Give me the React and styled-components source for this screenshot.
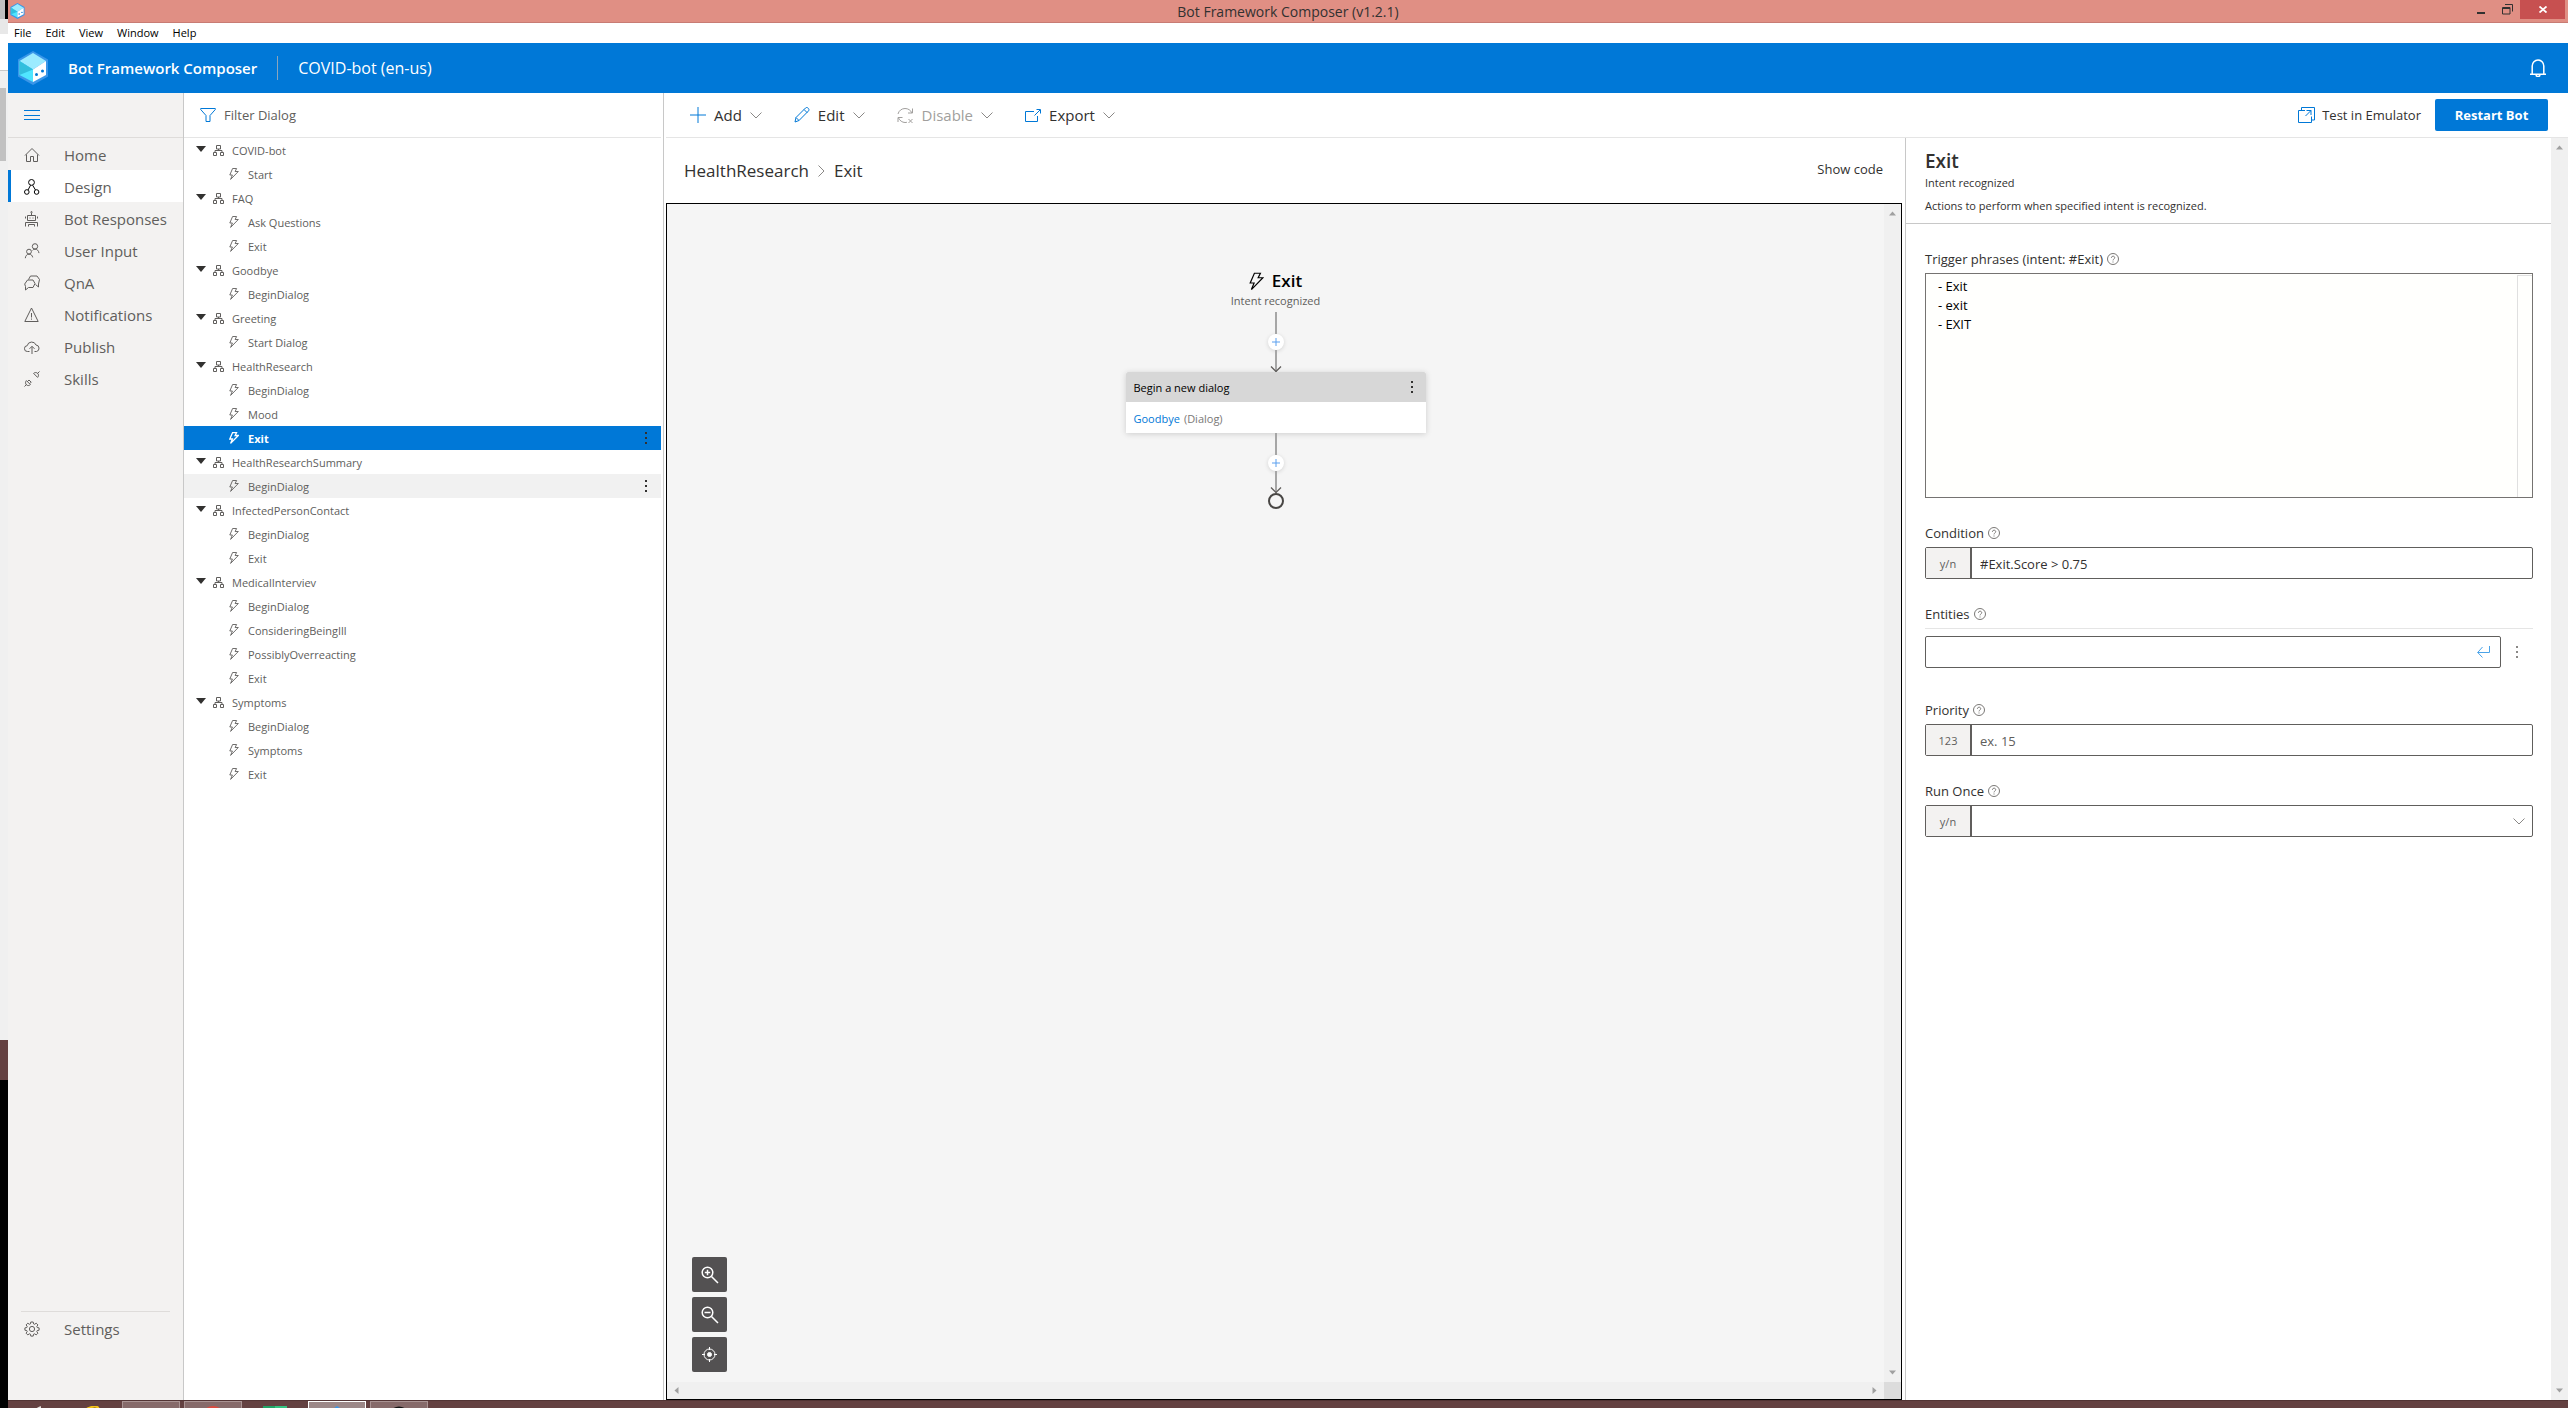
import React from 'react';
import styled, { createGlobalStyle, css } from 'styled-components';

const blue = '#0078d7';
const ink = '#323130';
const muted = '#605e5c';
const line = '#e5e5e5';

const GlobalStyle = createGlobalStyle`
  *, *::before, *::after { box-sizing: border-box; }
  body { margin: 0; background: #fff; }
  body, button, input, select, textarea {
    font-family: "Open Sans", "Noto Sans", sans-serif;
    color: ${ink};
  }
  button { border: 0; padding: 0; margin: 0; background: none; cursor: pointer; text-align: left; }
  a { color: inherit; text-decoration: none; }
  svg { display: block; flex: none; }
`;

/* ---------- icons ---------- */

const Icon = ({ w = 16, h = w, box = `0 0 ${w} ${h}`, sw = 1, color = 'currentColor', children }) => (
  <svg width={w} height={h} viewBox={box} fill="none" stroke={color} strokeWidth={sw} aria-hidden="true">
    {children}
  </svg>
);

const HomeIcon = () => (
  <Icon>
    <path d="M1 8.5 8 1.5l7 7M2.5 7.5v7h4v-5h3v5h4v-7" />
  </Icon>
);
const DesignIcon = () => (
  <Icon>
    <circle cx="7.5" cy="3.4" r="2.9" />
    <circle cx="2.8" cy="13" r="2.3" />
    <circle cx="12.6" cy="13" r="2.3" />
    <path d="M6.6 6.2 4 11M8.6 6.2l2.9 4.8" />
  </Icon>
);
const BotIcon = () => (
  <Icon>
    <circle cx="7.5" cy="1.2" r=".7" />
    <path d="M7.5 2v2M3.5 4.500h8v5h-8zM1.5 5.5v2M13.5 5.5v2M5.5 7h1M8.5 7h1M1.5 15.5v-4h12v4M4.5 15.5v-2h6v2" />
  </Icon>
);
const UsersIcon = () => (
  <Icon>
    <circle cx="11" cy="3.4" r="2.7" />
    <circle cx="5" cy="8.6" r="2.4" />
    <path d="M1.3 15.2c.2-2.4 1.6-4 3.7-4s3.4 1.3 3.700 3.200M8.6 7.4c.6-.8 1.400-1.300 2.400-1.300 2.100 0 3.600 1.500 4 4" />
  </Icon>
);
const ChatIcon = () => (
  <Icon>
    <path d="M4.500 4.500l2-3.500h6.500l2.500 3.500-1 4.500v3l-3-2.500M3.500 5h5.500l2 3.500-2 4H4.500l-3 2.500v-3.500L.7 9z" />
  </Icon>
);
const WarningIcon = () => (
  <Icon>
    <path d="M7.500 1 .8 14.500h13.400zM7.500 6v4.500M7.500 11.500v1.200" />
  </Icon>
);
const CloudIcon = () => (
  <Icon>
    <path d="M5.500 12.500h-2A2.900 2.900 0 0 1 3.200 6.700 4.600 4.600 0 0 1 12 6a3.300 3.300 0 0 1 .5 6.500h-2M8 15V7.500M5.500 9.800 8 7.300l2.500 2.500" />
  </Icon>
);
const PlugIcon = () => (
  <Icon>
    <path d="M.5 15.500l2-2M15.500.5l-2 2M2.400 9.600l4 4c-1.300 1.300-3 1.200-4 .2s-1.300-2.900 0-4.200zM9.600 2.400l4 4c1.300-1.300 1.100-3 .1-4s-2.800-1.300-4.100 0zM3.400 10.600 5 9l2 2M5.800 12.600l1.700-1.700" />
  </Icon>
);
const GearIcon = () => (
  <Icon>
    <circle cx="8" cy="8" r="2.600" />
    <path d="M6.800 1h2.400l.4 1.900 1 .4 1.600-1.100 1.700 1.700-1.100 1.600.4 1 1.900.4v2.300l-1.900.4-.4 1 1.100 1.600-1.700 1.700-1.600-1.100-1 .4-.4 1.900H6.800l-.4-1.900-1-.4-1.600 1.100-1.700-1.700 1.100-1.600-.4-1L.9 9.200V6.900l1.900-.4.4-1-1.100-1.600 1.700-1.700 1.600 1.100 1-.4z" />
  </Icon>
);
const MenuIcon = () => (
  <Icon color={blue}>
    <path d="M0 3.500h16M0 8.500h16M0 12.500h16" />
  </Icon>
);
const FilterIcon = () => (
  <Icon color={blue} w={16} h={14}>
    <path d="M.7.500h14.600v1L10 7.500v6H6v-6L.7 1.500z" />
  </Icon>
);
const CaretIcon = () => (
  <svg width="10" height="6" viewBox="0 0 10 6" aria-hidden="true">
    <path d="M0 0h10L5 6z" fill="#323130" />
  </svg>
);
const FlowIcon = () => (
  <Icon w={11}>
    <path d="M3.500.5h4v3.500h-4zM.5 7.500h3v3h-3zM7.500 7.500h3v3h-3zM5.500 4v1.500M2 7.500v-2h7v2" />
  </Icon>
);
const BoltIcon = ({ w = 10, h = 12, sw = 1 }) => (
  <Icon w={w} h={h} box="0 0 10 12" sw={sw}>
    <path d="M3.600.5h4L6.100 3.500h3.200L1.600 11.400 3.400 7H.8z" />
  </Icon>
);
const PlusIcon = () => (
  <Icon color={blue}>
    <path d="M8 0v16M0 8h16" />
  </Icon>
);
const SmallPlusIcon = () => (
  <Icon w={8} color="#5b9fee">
    <path d="M4 0v8M0 4h8" />
  </Icon>
);
const PencilIcon = () => (
  <Icon color={blue}>
    <path d="M1 15l1-4.500L11.500 1c1-1 2.100-.4 2.700.2.700.7 1.200 1.700.3 2.700L5 13.500zM10 2.500l3.300 3.300M2 10.500l3 3" />
  </Icon>
);
const DisableIcon = () => (
  <Icon w={17} box="0 0 17 16">
    <path d="M1 6.500C1.800 3.200 4.700 1 8 1c3.100 0 5.700 1.700 7 4.500M15.500 1v4.500H11M1 14.500V10h4.500M1.500 10.500c1.200 2.500 3.700 4.500 6.500 4.500.9 0 1.500 0 2-.3M11.500 11.500l4 4M15.500 11.500l-4 4" />
  </Icon>
);
const ExportIcon = () => (
  <Icon color={blue} w={16} h={13}>
    <path d="M9 2.500H.5v10h12V7M9.500 6.500l5.500-5.500M11.500.5h4v4" />
  </Icon>
);
const EmulatorIcon = () => (
  <Icon color={blue} w={17}>
    <path d="M3.500 3.500V.5h13v12.500h-3M7 3.500H.5v12h13V9.500M7.500 9l5.500-5.500M8.500 3.500h4.500V8" />
  </Icon>
);
const Chevron = ({ w = 12 }) => (
  <Icon w={w} h={7} box="0 0 12 7" color="#8a8886">
    <path d="M.5.5 6 6 11.500.5" />
  </Icon>
);
const ChevronRight = () => (
  <Icon w={7} h={12} color="#8a8886">
    <path d="M.5.500 6 6 .5 11.500" />
  </Icon>
);
const BellIcon = () => (
  <Icon w={16} h={18} color="#fff" sw={1.5}>
    <path d="M0 15.200h16M2.200 15V7A5.800 6 0 0 1 13.800 7v8M6 16c.3 1.200 1 1.500 2 1.500s1.700-.3 2-1.500" />
  </Icon>
);
const HelpIcon = () => (
  <Icon w={12} color="#7a7876">
    <circle cx="6" cy="6" r="5.500" />
    <path d="M4.400 4.800c0-2.200 3.300-2.100 3.300-.1C7.700 6 6 6.100 6 7.400M6 8.500v1" />
  </Icon>
);
const DotsIcon = ({ h = 12 }) => (
  <svg width="2" height={h} viewBox="0 0 2 12" fill="currentColor" aria-hidden="true">
    <path d="M0 0h2v2H0zM0 5h2v2H0zM0 10h2v2H0z" />
  </svg>
);
const EnterIcon = () => (
  <Icon w={13} h={12} color="#4aa3e8">
    <path d="M12.500 0v6.500H.7M5.500 1 .7 6.500l4.800 5" />
  </Icon>
);
const ZoomIcon = ({ plus }) => (
  <Icon w={18} color="#fff" sw={1.5}>
    <circle cx="6.500" cy="6.500" r="5.300" />
    <path d={plus ? 'M10.500 10.500l6.500 6.500M3.800 6.500h5.400M6.500 3.800v5.400' : 'M10.500 10.500l6.500 6.500M3.500 6.500h6'} />
  </Icon>
);
const TargetIcon = () => (
  <Icon w={15} color="#fff">
    <circle cx="7.500" cy="7.500" r="5.500" />
    <circle cx="7.500" cy="7.500" r="2" fill="#fff" />
    <path d="M7.500 0v3M7.500 12v3M0 7.500h3M12 7.500h3" />
  </Icon>
);
const ArrowHead = () => (
  <svg width="12" height="6" viewBox="0 0 12 6" fill="none" stroke="#605e5c" strokeWidth="1.300" aria-hidden="true">
    <path d="M1 .5 6 5.500l5-5" />
  </svg>
);
const ScrollArrow = ({ turn = 0 }) => (
  <svg width="7" height="7" viewBox="0 0 7 7" aria-hidden="true">
    <path d="M0 5.500h7L3.500 1.500z" fill="#a0a0a0" transform={`rotate(${turn} 3.5 3.5)`} />
  </svg>
);
const Logo = ({ w, h }) => (
  <svg width={w} height={h} viewBox="0 0 30 34" aria-hidden="true">
    <path d="M15 0 30 8.500v17L15 34 0 25.500v-17z" fill="#3a96e8" />
    <path d="M15 2 28 10l-13 8.500L1.500 10z" fill="#9cebff" />
    <path d="M1.500 10 15 18.500V31L1.500 24z" fill="#50e6ff" />
    <path d="M1.500 10 15 18.500 1.500 24z" fill="#32bedd" />
    <path d="M15 18.500 28 10v14l-13 7z" fill="#fff" />
    <circle cx="18.500" cy="23.500" r="1.500" fill="#0078d4" />
    <circle cx="24.500" cy="20" r="1.500" fill="#0078d4" />
  </svg>
);

/* ---------- desktop and window frame ---------- */

const Desktop = styled.div`
  display: flex;
  height: 100vh;
  overflow: hidden;
`;
const Behind = styled.div`
  flex: none;
  width: 8px;
  display: flex;
  flex-direction: column;
  background: #000;
`;
const Slice = styled.div`
  height: ${(p) => p.$h}px;
  width: ${(p) => p.$w || 8}px;
  background: ${(p) => p.$c};
  ${(p) => p.$top && `border-top: 1px solid ${p.$top};`}
  overflow: hidden;
`;
const Window = styled.div`
  flex: 1;
  min-width: 0;
  display: flex;
  flex-direction: column;
`;
const TitleBar = styled.div`
  flex: none;
  height: 23px;
  display: grid;
  grid-template-columns: 1fr auto 1fr;
  align-items: start;
  background: #e08f84;
  border-bottom: 1px solid #c87c74;
  font-size: 14px;
  line-height: 23px;
`;
const TitleIcon = styled.div`
  padding: 3px 0 0 2px;
`;
const WindowButtons = styled.div`
  display: flex;
  justify-content: flex-end;
  padding-right: 3px;
  color: #222;
`;
const WindowButton = styled.button`
  width: ${(p) => (p.$close ? 45 : 26)}px;
  height: 19px;
  display: grid;
  place-items: center;
  background: ${(p) => (p.$close ? '#c75050' : 'none')};
`;
const MenuBar = styled.nav`
  flex: none;
  height: 20px;
  display: flex;
  gap: 14px;
  padding-left: 6px;
  align-items: center;
  background: #fff;
`;
const MenuButton = styled.button`
  font-size: 11px;
  line-height: 20px;
  color: #000;
`;
const Header = styled.header`
  flex: none;
  height: 50px;
  display: flex;
  align-items: center;
  padding: 0 22px 0 10px;
  background: ${blue};
  color: #fff;
`;
const Brand = styled.strong`
  font-size: 15px;
  font-weight: 600;
  margin-left: 20px;
  padding-right: 20px;
`;
const Project = styled.span`
  display: flex;
  align-items: center;
  flex: 1;
  gap: 20px;
  font-size: 16px;
  &::before { content: ''; width: 1px; height: 24px; background: #8aa5bd; }
`;
const Body = styled.div`
  flex: 1;
  min-height: 0;
  display: flex;
`;
const Taskbar = styled.div`
  flex: none;
  height: 8px;
  display: flex;
  gap: 4px;
  padding-left: 4px;
  background: #644141;
  border-top: 1px solid #523434;
  overflow: hidden;
`;
const Task = styled.button`
  flex: none;
  width: ${(p) => (p.$narrow ? 44 : 58)}px;
  height: 24px;
  display: grid;
  justify-items: center;
  align-items: start;
  padding-top: 4px;
  border: 1px solid transparent;
  ${(p) => p.$open && css`background: #866a6a; border-color: #a99393;`}
  ${(p) => p.$active && css`background: #9c8888; border-color: #fff;`}
`;

/* ---------- left navigation ---------- */

const Nav = styled.nav`
  flex: none;
  width: 176px;
  display: flex;
  flex-direction: column;
  background: #f3f2f1;
  border-right: 1px solid #c8c8c8;
`;
const NavToggle = styled.button`
  height: 45px;
  padding-left: 16px;
  border-bottom: 1px solid #dedcda;
`;
const NavItem = styled.a`
  height: 32px;
  display: flex;
  align-items: center;
  gap: 24px;
  padding: 2px 0 0 13px;
  border-left: 3px solid ${(p) => (p.$active ? blue : 'transparent')};
  background: ${(p) => (p.$active ? '#fff' : 'none')};
  color: ${muted};
  font-size: 15px;
  svg { color: ${(p) => (p.$active ? '#000' : muted)}; }
`;
const NavFoot = styled.div`
  margin-top: auto;
  padding-bottom: 56px;
  &::before {
    content: '';
    display: block;
    height: 1px;
    margin: 0 13px;
    background: #dedcda;
  }
`;

/* ---------- dialog tree ---------- */

const TreePane = styled.aside`
  flex: none;
  width: 480px;
  padding-right: 2px;
  border-right: 1px solid #c8c8c8;
`;
const FilterBox = styled.label`
  height: 45px;
  display: flex;
  align-items: center;
  gap: 8px;
  padding-left: 16px;
  border-bottom: 1px solid ${line};
`;
const FilterInput = styled.input`
  flex: 1;
  border: 0;
  padding: 0;
  outline: 0;
  font-size: 13px;
  &::placeholder { color: ${muted}; opacity: 1; }
`;
const Tree = styled.ul`
  margin: 0;
  padding: 0;
  list-style: none;
`;
const TreeRow = styled.div`
  height: 24px;
  display: flex;
  align-items: center;
  padding-right: 14px;
  background: ${(p) => (p.$selected ? blue : p.$hover ? '#f1f1f1' : 'none')};
  color: ${(p) => (p.$selected ? '#323130' : muted)};
`;
const TreeButton = styled.button`
  flex: 1;
  display: flex;
  align-items: center;
  gap: ${(p) => (p.$child ? 9 : 8)}px;
  padding-left: ${(p) => (p.$child ? 45 : 7)}px;
  font-size: 11px;
  font-weight: ${(p) => (p.$selected ? 700 : 400)};
  color: ${(p) => (p.$selected ? '#fff' : muted)};
`;
const TreeLabel = styled.span`
  line-height: 22px;
  padding-top: 2px;
`;
const Twist = styled.button`
  padding: 0 0 2px 12px;
`;

/* ---------- main area ---------- */

const Main = styled.main`
  flex: 1;
  min-width: 0;
  display: flex;
  flex-direction: column;
  margin-left: 2px;
`;
const Toolbar = styled.div`
  flex: none;
  height: 45px;
  display: flex;
  align-items: center;
  padding: 0 20px 0 24px;
  border-bottom: 1px solid ${line};
`;
const ToolGroup = styled.div`
  flex: 1;
  display: flex;
  gap: 32px;
`;
const ToolButton = styled.button`
  display: flex;
  align-items: center;
  gap: 8px;
  font-size: 15px;
  color: ${(p) => (p.disabled ? '#a19f9d' : ink)};
`;
const EmulatorButton = styled.button`
  display: flex;
  align-items: center;
  gap: 7px;
  font-size: 13px;
  margin-right: 14px;
`;
const PrimaryButton = styled.button`
  height: 32px;
  width: 113px;
  border-radius: 2px;
  background: ${blue};
  color: #fff;
  font-size: 13px;
  font-weight: 700;
  text-align: center;
`;
const Split = styled.div`
  flex: 1;
  min-height: 0;
  display: flex;
`;
const Editor = styled.section`
  flex: 1;
  min-width: 0;
  display: flex;
  flex-direction: column;
  padding-right: 3px;
`;
const CrumbBar = styled.div`
  flex: none;
  height: 65px;
  display: flex;
  align-items: center;
  justify-content: space-between;
  padding: 0 19px 0 18px;
`;
const Crumbs = styled.div`
  display: flex;
  align-items: center;
  gap: 9px;
  font-size: 17px;
`;
const TextButton = styled.button`
  font-size: 13px;
  padding-bottom: 4px;
`;
const Frame = styled.div`
  flex: 1;
  min-height: 0;
  display: grid;
  grid-template: 1fr 17px / 1fr 17px;
  border: 1px solid #000;
  background: #f5f5f5;
`;
const Canvas = styled.div`
  position: relative;
  display: flex;
  flex-direction: column;
  align-items: center;
  padding-top: 65px;
`;
const Scroll = styled.div`
  display: flex;
  flex-direction: ${(p) => (p.$across ? 'row' : 'column')};
  align-items: center;
  justify-content: space-between;
  padding: ${(p) => (p.$across ? '0 6px' : '6px 0')};
  background: #f0f0f0;
`;
const Corner = styled.div`
  background: #dcdcdc;
`;
const NodeTitle = styled.div`
  display: flex;
  align-items: center;
  gap: 8px;
  font-size: 17px;
  line-height: 24px;
  font-weight: 600;
  color: #000;
`;
const NodeNote = styled.div`
  font-size: 11px;
  line-height: 16px;
  color: ${muted};
  margin-bottom: 3px;
`;
const Edge = styled.div`
  display: flex;
  flex-direction: column;
  align-items: center;
  height: 60px;
`;
const Stem = styled.div`
  position: relative;
  width: 2px;
  height: 22px;
  background: #a6a6a6;
  svg { position: absolute; left: -5px; bottom: 0; }
`;
const AddButton = styled.button`
  width: 16px;
  height: 16px;
  border-radius: 50%;
  display: grid;
  place-items: center;
  background: #fff;
  box-shadow: 0 1px 4px rgba(0, 0, 0, 0.14);
`;
const Card = styled.div`
  width: 300px;
  border-radius: 2px 2px 0 0;
  background: #fff;
  overflow: hidden;
`;
const CardShadow = styled.div`
  box-shadow: 0 1px 6px rgba(0, 0, 0, 0.16);
`;
const CardHead = styled.div`
  height: 30px;
  display: flex;
  align-items: center;
  justify-content: space-between;
  padding: 0 13px 0 8px;
  background: #d7d7d7;
  font-size: 11px;
  color: #000;
`;
const CardBody = styled.div`
  height: 31px;
  display: flex;
  align-items: center;
  gap: 4px;
  padding: 1px 0 0 8px;
  font-size: 11px;
  color: #7a7876;
  a { color: ${blue}; }
`;
const EndDot = styled.div`
  width: 16px;
  height: 16px;
  border: 2px solid #484644;
  border-radius: 50%;
`;
const ZoomTools = styled.div`
  position: absolute;
  left: 25px;
  bottom: 10px;
  display: grid;
  gap: 5px;
`;
const ZoomButton = styled.button`
  width: 35px;
  height: 35px;
  display: grid;
  place-items: center;
  border-radius: 2px;
  background: #535152;
`;

/* ---------- properties ---------- */

const Properties = styled.aside`
  flex: none;
  width: 663px;
  display: flex;
  border-left: 1px solid #c8c8c8;
`;
const PropScroll = styled(Scroll)`
  width: 17px;
`;
const PropBody = styled.div`
  flex: 1;
  min-width: 0;
`;
const PropHead = styled.div`
  height: 86px;
  padding: 11px 18px 0 19px;
  border-bottom: 1px solid #c8c8c8;
  font-size: 11px;
  line-height: 16px;
  p { margin: 7px 0 0; }
`;
const PropTitle = styled.h1`
  margin: 0 0 2px;
  font-size: 19px;
  line-height: 24px;
  font-weight: 600;
`;
const Semi = styled.div`
  font-weight: 500;
`;
const Form = styled.form`
  padding: 25px 18px 0 19px;
`;
const Field = styled.div`
  margin-bottom: ${(p) => p.$gap || 25}px;
`;
const FieldLabel = styled.label`
  display: flex;
  align-items: center;
  gap: 4px;
  height: 24px;
  padding-bottom: 4px;
  font-size: 13px;
  ${(p) => p.$ruled && css`height: 25px; margin-bottom: 7px; border-bottom: 1px solid ${line};`}
`;
const Phrases = styled.div`
  display: flex;
  height: 225px;
  border: 1px solid #757371;
  background: #fffffd;
  &::after {
    content: '';
    width: 15px;
    margin-top: 1px;
    border: solid #e0e0e0;
    border-width: 1px 0 0 1px;
  }
`;
const PhraseText = styled.textarea`
  flex: 1;
  border: 0;
  outline: 0;
  resize: none;
  padding: 3px 0 0 12px;
  background: none;
  font-size: 13px;
  line-height: 19px;
  color: #000;
`;
const Control = styled.div`
  flex: 1;
  height: 32px;
  display: flex;
  align-items: center;
  border: 1px solid ${muted};
  border-radius: 2px;
  padding-right: ${(p) => p.$end || 0}px;
`;
const Kind = styled.span`
  flex: none;
  align-self: stretch;
  width: 46px;
  display: grid;
  place-items: center;
  background: #f3f2f1;
  border-right: 2px solid ${muted};
  font-size: 11px;
  color: ${muted};
`;
const bare = css`
  flex: 1;
  min-width: 0;
  height: 30px;
  border: 0;
  outline: 0;
  padding: 2px 8px 0;
  background: none;
  font-size: 13px;
`;
const TextInput = styled.input`
  ${bare}
  &::placeholder { color: ${muted}; opacity: 1; }
`;
const SelectInput = styled.select`
  ${bare}
  appearance: none;
`;
const EntityRow = styled.div`
  display: flex;
  align-items: center;
`;
const MoreButton = styled.button`
  width: 32px;
  display: grid;
  place-items: center;
  color: #8a8886;
`;

/* ---------- data ---------- */

const navItems = [
  ['Home', HomeIcon],
  ['Design', DesignIcon],
  ['Bot Responses', BotIcon],
  ['User Input', UsersIcon],
  ['QnA', ChatIcon],
  ['Notifications', WarningIcon],
  ['Publish', CloudIcon],
  ['Skills', PlugIcon],
];

const dialogs = [
  ['COVID-bot', ['Start']],
  ['FAQ', ['Ask Questions', 'Exit']],
  ['Goodbye', ['BeginDialog']],
  ['Greeting', ['Start Dialog']],
  ['HealthResearch', ['BeginDialog', 'Mood', 'Exit']],
  ['HealthResearchSummary', ['BeginDialog']],
  ['InfectedPersonContact', ['BeginDialog', 'Exit']],
  ['MedicalInterviev', ['BeginDialog', 'ConsideringBeingIll', 'PossiblyOverreacting', 'Exit']],
  ['Symptoms', ['BeginDialog', 'Symptoms', 'Exit']],
];

function Triggers({ dialog, names }) {
  return (
    <Tree>
      {names.map((name) => {
        const selected = dialog === 'HealthResearch' && name === 'Exit';
        const hover = dialog === 'HealthResearchSummary';
        return (
          <li key={name}>
            <TreeRow $selected={selected} $hover={hover}>
              <TreeButton $child $selected={selected}>
                <BoltIcon sw={selected ? 1.3 : 0.9} />
                <TreeLabel>{name}</TreeLabel>
              </TreeButton>
              {(selected || hover) && (
                <button aria-label="More options">
                  <DotsIcon />
                </button>
              )}
            </TreeRow>
          </li>
        );
      })}
    </Tree>
  );
}

function Connector() {
  return (
    <Edge>
      <Stem />
      <AddButton aria-label="Add action">
        <SmallPlusIcon />
      </AddButton>
      <Stem>
        <ArrowHead />
      </Stem>
    </Edge>
  );
}

export default function App() {
  return (
    <Desktop>
      <GlobalStyle />
      <Behind>
        <Slice $h={19} $w={5} $c="#c0c0c0" />
        <Slice $h={15} $c="#e8e8e8" />
        <Slice $h={36} $c="#fff" />
        <Slice $h={18} $c="#f0f0f0" $top="#c8c8c8" />
        <Slice $h={73} $c="linear-gradient(90deg, #c1c1c1 6px, #f0f0f0 6px)" />
        <Slice $h={879} $c="#f0f0f0" />
        <Slice $h={40} $c="#644141" />
      </Behind>
      <Window>
        <TitleBar>
          <TitleIcon>
            <Logo w={15} h={16} />
          </TitleIcon>
          <span>Bot Framework Composer (v1.2.1)</span>
          <WindowButtons>
            <WindowButton aria-label="Minimize">
              <Icon w={8} h={8} sw={2}><path d="M0 7h8" /></Icon>
            </WindowButton>
            <WindowButton aria-label="Restore">
              <Icon w={11} h={11}><path d="M.5 3.500h7.500v6.500H.500zM.5 4.500h7.500M3 .500h7.500v7" /></Icon>
            </WindowButton>
            <WindowButton $close aria-label="Close">
              <Icon w={8} h={7} sw={1.8} color="#fff"><path d="M.5.5l7 6M7.500.5l-7 6" /></Icon>
            </WindowButton>
          </WindowButtons>
        </TitleBar>
        <MenuBar>
          {['File', 'Edit', 'View', 'Window', 'Help'].map((m) => (
            <MenuButton key={m}>{m}</MenuButton>
          ))}
        </MenuBar>
        <Header>
          <Logo w={30} h={34} />
          <Brand>Bot Framework Composer</Brand>
          <Project>COVID-bot (en-us)</Project>
          <button aria-label="Notifications">
            <BellIcon />
          </button>
        </Header>
        <Body>
          <Nav>
            <NavToggle aria-label="Collapse navigation">
              <MenuIcon />
            </NavToggle>
            {navItems.map(([name, Glyph]) => (
              <NavItem key={name} href="#" $active={name === 'Design'}>
                <Glyph />
                {name}
              </NavItem>
            ))}
            <NavFoot>
              <NavItem href="#">
                <GearIcon />
                Settings
              </NavItem>
            </NavFoot>
          </Nav>
          <TreePane>
            <FilterBox>
              <FilterIcon />
              <FilterInput placeholder="Filter Dialog" aria-label="Filter Dialog" />
            </FilterBox>
            <Tree>
              {dialogs.map(([name, triggers]) => (
                <li key={name}>
                  <TreeRow>
                    <Twist aria-label={`Collapse ${name}`}>
                      <CaretIcon />
                    </Twist>
                    <TreeButton>
                      <FlowIcon />
                      <TreeLabel>{name}</TreeLabel>
                    </TreeButton>
                  </TreeRow>
                  <Triggers dialog={name} names={triggers} />
                </li>
              ))}
            </Tree>
          </TreePane>
          <Main>
            <Toolbar>
              <ToolGroup>
                <ToolButton><PlusIcon />Add<Chevron /></ToolButton>
                <ToolButton><PencilIcon />Edit<Chevron /></ToolButton>
                <ToolButton disabled><DisableIcon />Disable<Chevron /></ToolButton>
                <ToolButton><ExportIcon />Export<Chevron /></ToolButton>
              </ToolGroup>
              <EmulatorButton><EmulatorIcon />Test in Emulator</EmulatorButton>
              <PrimaryButton>Restart Bot</PrimaryButton>
            </Toolbar>
            <Split>
              <Editor>
                <CrumbBar>
                  <Crumbs>
                    <a href="#">HealthResearch</a>
                    <ChevronRight />
                    <a href="#">Exit</a>
                  </Crumbs>
                  <TextButton>Show code</TextButton>
                </CrumbBar>
                <Frame>
                  <Canvas>
                    <NodeTitle>
                      <BoltIcon w={15} h={19} sw={0.8} />
                      Exit
                    </NodeTitle>
                    <NodeNote>Intent recognized</NodeNote>
                    <Connector />
                    <CardShadow>
                      <Card>
                        <CardHead>
                          Begin a new dialog
                          <button aria-label="Action options">
                            <DotsIcon />
                          </button>
                        </CardHead>
                        <CardBody>
                          <a href="#">Goodbye</a>
                          <span>(Dialog)</span>
                        </CardBody>
                      </Card>
                    </CardShadow>
                    <Connector />
                    <EndDot />
                    <ZoomTools>
                      <ZoomButton aria-label="Zoom in"><ZoomIcon plus /></ZoomButton>
                      <ZoomButton aria-label="Zoom out"><ZoomIcon /></ZoomButton>
                      <ZoomButton aria-label="Fit to view"><TargetIcon /></ZoomButton>
                    </ZoomTools>
                  </Canvas>
                  <Scroll>
                    <ScrollArrow />
                    <ScrollArrow turn={180} />
                  </Scroll>
                  <Scroll $across>
                    <ScrollArrow turn={-90} />
                    <ScrollArrow turn={90} />
                  </Scroll>
                  <Corner />
                </Frame>
              </Editor>
              <Properties>
                <PropBody>
                  <PropHead>
                    <PropTitle>Exit</PropTitle>
                    <Semi>Intent recognized</Semi>
                    <p>Actions to perform when specified intent is recognized.</p>
                  </PropHead>
                  <Form>
                    <Field>
                      <FieldLabel htmlFor="phrases">Trigger phrases (intent: #Exit) <HelpIcon /></FieldLabel>
                      <Phrases>
                        <PhraseText id="phrases" spellCheck="false" defaultValue={'- Exit\n- exit\n- EXIT'} />
                      </Phrases>
                    </Field>
                    <Field>
                      <FieldLabel htmlFor="condition">Condition <HelpIcon /></FieldLabel>
                      <Control>
                        <Kind>y/n</Kind>
                        <TextInput id="condition" defaultValue="#Exit.Score > 0.75" />
                      </Control>
                    </Field>
                    <Field $gap={32}>
                      <FieldLabel $ruled htmlFor="entities">Entities <HelpIcon /></FieldLabel>
                      <EntityRow>
                        <Control $end={10}>
                          <TextInput id="entities" />
                          <EnterIcon />
                        </Control>
                        <MoreButton type="button" aria-label="Entity options">
                          <DotsIcon h={14} />
                        </MoreButton>
                      </EntityRow>
                    </Field>
                    <Field>
                      <FieldLabel htmlFor="priority">Priority <HelpIcon /></FieldLabel>
                      <Control>
                        <Kind>123</Kind>
                        <TextInput id="priority" placeholder="ex. 15" />
                      </Control>
                    </Field>
                    <Field>
                      <FieldLabel htmlFor="once">Run Once <HelpIcon /></FieldLabel>
                      <Control $end={7}>
                        <Kind>y/n</Kind>
                        <SelectInput id="once" defaultValue="">
                          <option value=""></option>
                          <option value="true">true</option>
                          <option value="false">false</option>
                        </SelectInput>
                        <Chevron />
                      </Control>
                    </Field>
                  </Form>
                </PropBody>
                <PropScroll>
                  <ScrollArrow />
                  <ScrollArrow turn={180} />
                </PropScroll>
              </Properties>
            </Split>
          </Main>
        </Body>
        <Taskbar>
          <Task $narrow aria-label="Tools"><Icon w={14} h={8} color="#e8e4e0" sw={2}><path d="M0 8 14 1" /></Icon></Task>
          <Task aria-label="Internet Explorer"><Icon w={22} h={10} color="#f5c518" sw={2}><path d="M1 9C7 2 17-1 20 1.500c1 1-1 3-2 4" /></Icon></Task>
          <Task $open aria-label="File Explorer"><Icon w={16} h={8} color="none"><path d="M0 2h16v6H0z" fill="#cdb878" /></Icon></Task>
          <Task $open aria-label="Chrome"><Icon w={24} h={12} color="none"><circle cx="12" cy="12" r="12" fill="#db4a3f" /></Icon></Task>
          <Task aria-label="Sheets"><Icon w={24} h={8} color="none"><path d="M0 0h12v8H0z" fill="#21a366" /><path d="M12 0h12v8H12z" fill="#33c481" /></Icon></Task>
          <Task $active aria-label="Bot Framework Composer"><Icon w={14} h={8} color="none"><path d="M7 0l7 5v3H0V5z" fill="#3a96e8" /></Icon></Task>
          <Task $open aria-label="GitHub"><Icon w={22} h={11} color="#111" sw={2}><circle cx="11" cy="11" r="9.500" fill="#fff" /></Icon></Task>
        </Taskbar>
      </Window>
    </Desktop>
  );
}
